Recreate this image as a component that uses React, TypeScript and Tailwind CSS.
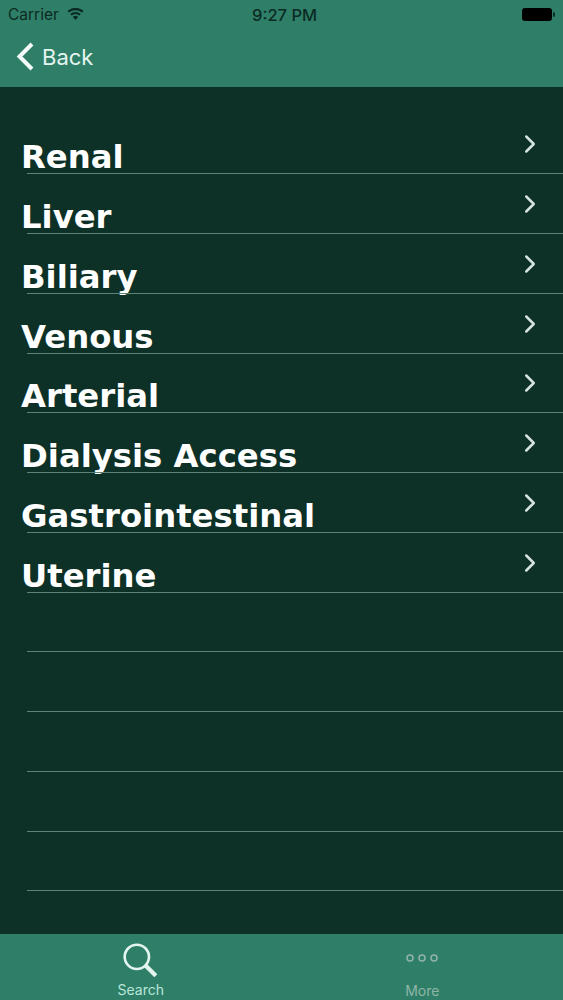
import { ChevronRight } from "lucide-react";

const items = ["Renal", "Liver", "Biliary", "Venous", "Arterial", "Dialysis Access", "Gastrointestinal", "Uterine", "", "", "", "", ""];

function StatusBar() {
  return (
    <div className="relative flex h-[29px] items-center px-[8px] text-[#0b2a23] font-['Inter',sans-serif]">
      <span className="text-[15.5px] leading-none">Carrier</span>
      <svg className="ml-[8px] mb-[2px]" width="17" height="12" viewBox="0 0 17 12" fill="#0b2a23">
        <path d="M8.5 12 L5.8 8.9 A4 4 0 0 1 11.2 8.9 Z" />
        <path d="M4.6 7.6 L3.2 6 A8 8 0 0 1 13.8 6 L12.4 7.6 A6 6 0 0 0 4.6 7.6 Z" />
        <path d="M2 4.6 L0.4 3 A12 12 0 0 1 16.6 3 L15 4.6 A10 10 0 0 0 2 4.6 Z" />
      </svg>
      <span className="absolute left-[252px] top-[6px] text-[16.5px] leading-[18px] font-medium">9:27 PM</span>
      <div className="ml-auto mr-[0px] flex items-center">
        <div className="h-[13px] w-[30px] rounded-[3px] bg-black" />
        <div className="ml-[1px] h-[5px] w-[2px] rounded-r-sm bg-[#0b2a23]" />
      </div>
    </div>
  );
}

function Row({ label }: { label: string }) {
  return (
    <div className="relative flex h-[59.77px] items-end pl-[21px] pr-[18px]">
      <span className="flex-1 translate-y-[2px] font-['DejaVu_Sans',sans-serif] text-[32.3px] font-bold leading-[38px] text-white whitespace-nowrap">
        {label}
      </span>
      {label && (
        <ChevronRight className="mb-[15px] text-[#d5e3de]" size={30} strokeWidth={2} />
      )}
      <div className="absolute bottom-0 left-[27px] right-0 h-px bg-[#5c8377]" />
    </div>
  );
}

export default function App() {
  return (
    <div className="flex h-[1000px] w-[563px] flex-col overflow-hidden bg-[#0d3027]">
      <div className="h-[87px] shrink-0 bg-[#2f7f68]">
        <StatusBar />
        <div className="flex h-[56px] items-center pl-[16px] text-[#e4f5ef]">
          <svg width="20" height="30" viewBox="0 0 20 30" fill="none" stroke="#f4fbf8" strokeWidth="4">
            <path d="M16 2 L3.5 14.5 L16 27" />
          </svg>
          <span className="ml-[6px] font-['Inter',sans-serif] text-[22px] leading-none">Back</span>
        </div>
      </div>
      <div className="flex-1 pt-[27.5px]">
        {items.map((item, i) => (
          <Row key={i} label={item} />
        ))}
      </div>
      <div className="flex h-[66px] shrink-0 bg-[#2f7f68]">
        <div className="flex w-1/2 flex-col items-center">
          <svg className="mt-[7px] mr-[1px]" width="38" height="38" viewBox="0 0 36 36" fill="none" stroke="#e4f5ef">
            <circle cx="15" cy="15" r="11.5" strokeWidth="2.5" />
            <path d="M23.5 23.5 L33 33" strokeWidth="4" />
          </svg>
          <span className="mt-[3px] font-['Inter',sans-serif] text-[14px] leading-[16px] text-[#b9e6d8]">Search</span>
        </div>
        <div className="flex w-1/2 flex-col items-center">
          <svg className="mt-[18px]" width="36" height="12" viewBox="0 0 36 12" fill="none" stroke="#8fb5a8" strokeWidth="1.5">
            <circle cx="6" cy="6" r="3" />
            <circle cx="18" cy="6" r="3" />
            <circle cx="30" cy="6" r="3" />
          </svg>
          <span className="mt-[19px] font-['Inter',sans-serif] text-[14px] leading-[16px] text-[#8fb5a8]">More</span>
        </div>
      </div>
    </div>
  );
}
